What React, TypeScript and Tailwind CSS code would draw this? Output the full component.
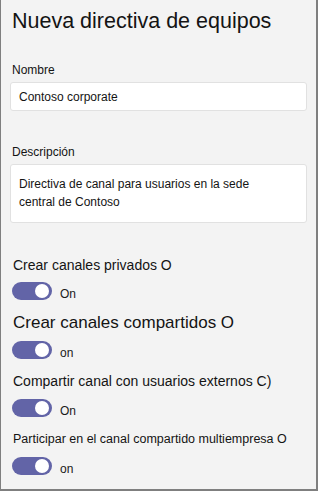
const font = { fontFamily: '"Liberation Sans", Arial, sans-serif' };

function Toggle({ label }: { label: string }) {
  return (
    <div className="flex items-center h-[18px]">
      <div className="relative w-[40px] h-[18px] rounded-full bg-[#6264a7]">
        <div className="absolute right-[3px] top-[2px] w-[14px] h-[14px] rounded-full bg-white" />
      </div>
      <span className="ml-[8px] text-[12px] text-[#1a1a1a] mt-[5px]">{label}</span>
    </div>
  );
}

export default function App() {
  return (
    <div
      className="w-[318px] h-[491px] bg-[#f3f3f3] border-l border-r-2 border-b-2 border-[#7f7f7f] px-[9px] text-[#141414]"
      style={font}
    >
      <h1 className="pt-[7px] pl-[2px] text-[21.5px] leading-[28px]">Nueva directiva de equipos</h1>

      <div className="mt-[27px] pl-[2px] text-[12px] leading-[16px]">Nombre</div>
      <div className="mt-[4px] h-[29px] bg-white border border-[#e1e1e1] rounded-[3px] flex items-center pl-[8px] text-[12px]">
        Contoso corporate
      </div>

      <div className="mt-[33px] pl-[2px] text-[12px] leading-[16px]">Descripción</div>
      <div className="mt-[4px] h-[59px] bg-white border border-[#e1e1e1] rounded-[3px] px-[8px] pt-[10px] text-[12px] leading-[18px]">
        Directiva de canal para usuarios en la sede
        <br />
        central de Contoso
      </div>

      <div className="mt-[33px] pl-[3px] text-[14px] leading-[18px]">Crear canales privados O</div>
      <div className="mt-[8px] pl-[2px]">
        <Toggle label="On" />
      </div>

      <div className="mt-[12px] pl-[3px] text-[17px] leading-[22px]">Crear canales compartidos O</div>
      <div className="mt-[7px] pl-[2px]">
        <Toggle label="on" />
      </div>

      <div className="mt-[13px] pl-[3px] text-[14px] leading-[18px]">Compartir canal con usuarios externos C)</div>
      <div className="mt-[9px] pl-[2px]">
        <Toggle label="On" />
      </div>

      <div className="mt-[13px] pl-[3px] text-[12.5px] leading-[18px]">Participar en el canal compartido multiempresa O</div>
      <div className="mt-[9px] pl-[2px]">
        <Toggle label="on" />
      </div>
    </div>
  );
}
